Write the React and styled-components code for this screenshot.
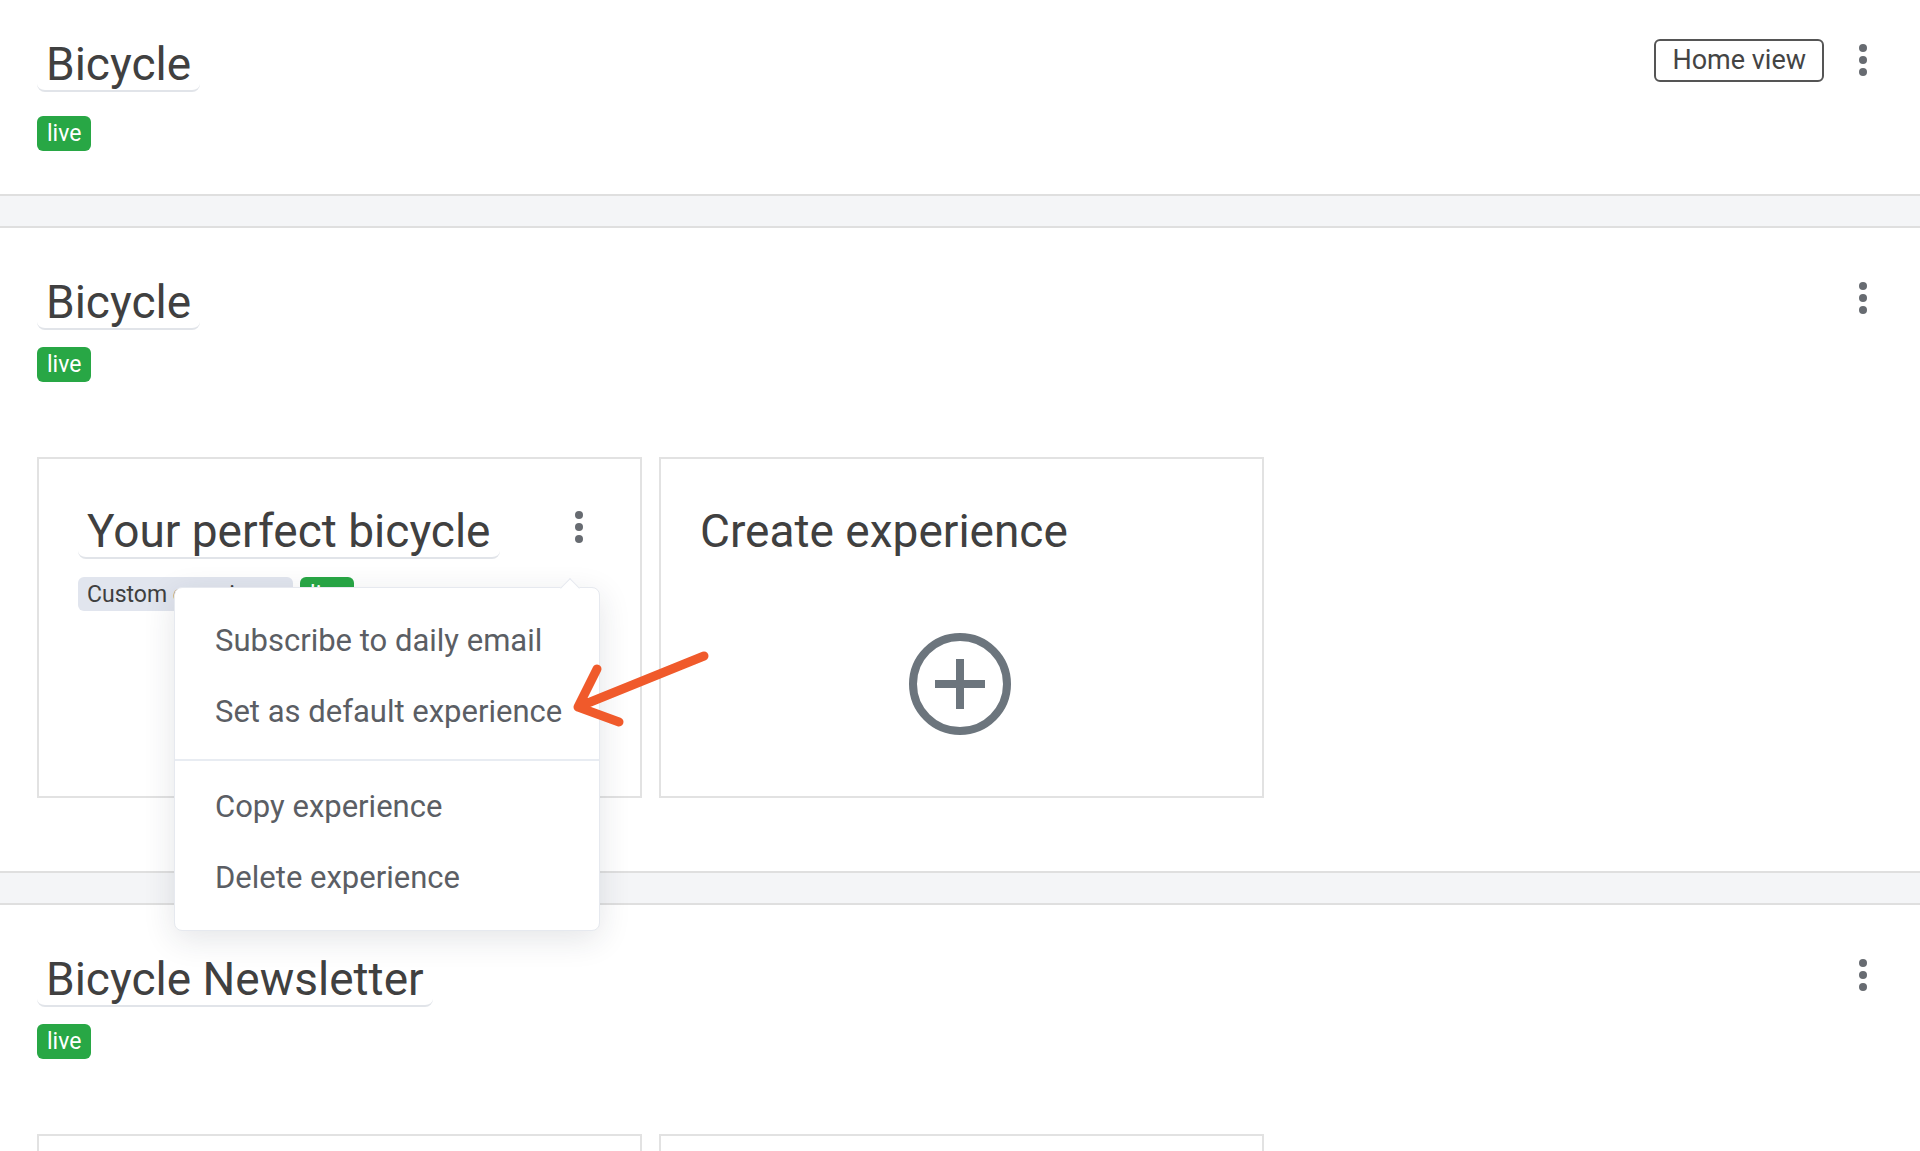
import React from 'react';
import styled, { createGlobalStyle } from 'styled-components';

const GlobalStyle = createGlobalStyle`
  html, body {
    margin: 0;
    padding: 0;
    overflow: hidden;
    background: #fff;
  }
  body {
    font-family: Roboto, "Liberation Sans", Arial, sans-serif;
    color: #444;
  }
  * { box-sizing: border-box; }
`;

const Page = styled.div`
  display: flex;
  flex-direction: column;
`;

const Section = styled.section`
  position: relative;
  padding: ${p => p.$top}px 39px ${p => p.$bottom}px 37px;
  background: #fff;
`;

const Band = styled.div`
  height: 34px;
  background: #f4f5f7;
  border-top: 2px solid #dfdfdf;
  border-bottom: 2px solid #dfdfdf;
`;

const HeaderRow = styled.div`
  display: flex;
  align-items: flex-start;
  justify-content: space-between;
`;

const TitleBlock = styled.div`
  display: flex;
  flex-direction: column;
  align-items: flex-start;
`;

const TitleBox = styled.h2`
  margin: 0;
  padding: 0 ${p => (p.$plain ? 0 : 9)}px;
  height: 54px;
  font-size: 46px;
  font-weight: 400;
  line-height: 52px;
  color: #404040;
  white-space: nowrap;
  border-radius: 8px;
  border-bottom: 2px solid ${p => (p.$plain ? 'transparent' : '#e1e4e9')};
`;

const Tags = styled.div`
  display: flex;
  gap: 7px;
  margin-top: ${p => p.$gap}px;
`;

const Badge = styled.span`
  display: inline-flex;
  align-items: center;
  height: ${p => p.$h || 35}px;
  padding: 0 ${p => (p.$tone === 'live' ? 10 : 9)}px;
  border-radius: 6px;
  background: ${p => (p.$tone === 'live' ? '#28a745' : '#e1e5ee')};
  color: ${p => (p.$tone === 'live' ? '#fff' : '#3f3f3f')};
  font-size: 23px;
  white-space: nowrap;
`;

const Actions = styled.div`
  display: flex;
  align-items: center;
  gap: 21px;
  height: 44px;
`;

const OutlineButton = styled.button`
  height: 43px;
  padding: 0 16px;
  border: 2px solid #555;
  border-radius: 6px;
  background: #fff;
  font-family: inherit;
  font-size: 27px;
  color: #444;
`;

const KebabWrap = styled.div`
  position: relative;
`;

const KebabButton = styled.button`
  width: 36px;
  height: 44px;
  padding: 0;
  border: 0;
  background: none;
  display: flex;
  flex-direction: column;
  align-items: center;
  justify-content: center;
  gap: 3.5px;

  span {
    width: 8.5px;
    height: 8.5px;
    border-radius: 50%;
    background: #676b71;
  }
`;

const CardRow = styled.div`
  display: flex;
  gap: 17px;
  margin-top: 75px;
`;

const Card = styled.div`
  position: relative;
  width: 605px;
  height: 341px;
  padding: 46px 43px 0 39px;
  border: 2px solid #e2e2e2;
  background: #fff;
  display: flex;
  flex-direction: column;
`;

const CardHeader = styled.div`
  display: flex;
  align-items: flex-start;
  justify-content: space-between;
`;

const PlusWrap = styled.div`
  margin: 73px auto 0;
  width: 104px;
  height: 104px;
  color: #6c757d;
`;

const Menu = styled.div`
  position: absolute;
  z-index: 10;
  top: 82px;
  right: -3px;
  width: 426px;
  background: #fff;
  border: 1px solid #e6e9ef;
  border-radius: 8px;
  box-shadow: 0 8px 32px rgba(30, 40, 60, 0.12);

  &::before {
    content: '';
    position: absolute;
    top: -7.5px;
    right: 22px;
    width: 13px;
    height: 13px;
    background: #fff;
    border-left: 1px solid #e6e9ef;
    border-top: 1px solid #e6e9ef;
    transform: rotate(45deg);
  }
`;

const MenuGroup = styled.div`
  padding: ${p => p.$pt}px 0 ${p => p.$pb}px;
  & + & {
    border-top: 2px solid #e8ecf2;
  }
`;

const MenuItem = styled.div`
  height: 71px;
  display: flex;
  align-items: center;
  padding: 0 40px;
  font-size: 31px;
  color: #5b5e64;
  white-space: nowrap;
`;

const Annotation = styled.svg`
  position: absolute;
  z-index: 20;
  left: 570px;
  top: 417px;
  width: 145px;
  height: 90px;
  pointer-events: none;
`;

const Kebab = () => (
  <KebabButton aria-label="More">
    <span />
    <span />
    <span />
  </KebabButton>
);

const PlusIcon = () => (
  <svg width="104" height="104" viewBox="0 0 104 104">
    <circle cx="52" cy="52" r="47" fill="none" stroke="currentColor" strokeWidth="8" />
    <path d="M52 27v50M27 52h50" stroke="currentColor" strokeWidth="8" />
  </svg>
);

const CreateCard = () => (
  <Card>
    <TitleBox $plain>Create experience</TitleBox>
    <PlusWrap>
      <PlusIcon />
    </PlusWrap>
  </Card>
);

const ExperienceCard = ({ title, withMenu }) => (
  <Card>
    <CardHeader>
      <TitleBlock>
        <TitleBox>{title}</TitleBox>
        <Tags $gap={18}>
          <Badge $h={34}>Custom experience</Badge>
          <Badge $h={34} $tone="live">live</Badge>
        </Tags>
      </TitleBlock>
      <KebabWrap>
        <Kebab />
        {withMenu && (
          <Menu>
            <MenuGroup $pt={17} $pb={12}>
              <MenuItem>Subscribe to daily email</MenuItem>
              <MenuItem>Set as default experience</MenuItem>
            </MenuGroup>
            <MenuGroup $pt={10} $pb={17}>
              <MenuItem>Copy experience</MenuItem>
              <MenuItem>Delete experience</MenuItem>
            </MenuGroup>
          </Menu>
        )}
      </KebabWrap>
    </CardHeader>
  </Card>
);

const SectionHeader = ({ title, gap, children }) => (
  <HeaderRow>
    <TitleBlock>
      <TitleBox>{title}</TitleBox>
      <Tags $gap={gap}>
        <Badge $tone="live">live</Badge>
      </Tags>
    </TitleBlock>
    <Actions>
      {children}
      <Kebab />
    </Actions>
  </HeaderRow>
);

export default function App() {
  return (
    <Page>
      <GlobalStyle />
      <Section $top={38} $bottom={43}>
        <SectionHeader title="Bicycle" gap={24}>
          <OutlineButton>Home view</OutlineButton>
        </SectionHeader>
      </Section>
      <Band />
      <Section $top={48} $bottom={73} style={{ zIndex: 2 }}>
        <SectionHeader title="Bicycle" gap={17} />
        <CardRow>
          <ExperienceCard title="Your perfect bicycle" withMenu />
          <CreateCard />
        </CardRow>
        <Annotation viewBox="0 0 145 90">
          <path
            d="M134 11L8 62M27 24L8 62L49 77"
            fill="none"
            stroke="#f05a2b"
            strokeWidth="9"
            strokeLinecap="round"
            strokeLinejoin="round"
          />
        </Annotation>
      </Section>
      <Band />
      <Section $top={48} $bottom={73}>
        <SectionHeader title="Bicycle Newsletter" gap={17} />
        <CardRow>
          {/* only the top edges of this row fall inside the window */}
          <Card />
          <Card />
        </CardRow>
      </Section>
    </Page>
  );
}
